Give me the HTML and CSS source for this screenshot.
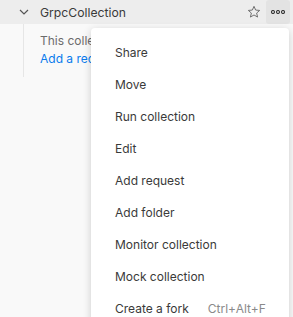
FILE: index.html
```html
<!DOCTYPE html>
<html lang="en">
  <head>
    <meta charset="UTF-8" />
    <title>Collection</title>
    <link rel="stylesheet" href="styles.css">
  </head>
  <body>
    <div class="sidebar">
      <div class="collection-row">
        <span class="chevron">
          <svg width="10" height="6" viewBox="0 0 10 6"><path d="M1 1l4 4 4-4" fill="none" stroke="#555" stroke-width="1.2"/></svg>
        </span>
        <span class="collection-name">GrpcCollection</span>
        <span class="star">
          <svg width="14" height="14" viewBox="0 0 16 16"><path d="M8 1.5l1.9 4.3 4.6.4-3.5 3 1.1 4.6L8 11.4l-4.1 2.4 1.1-4.6-3.5-3 4.6-.4z" fill="none" stroke="#6b6b6b" stroke-width="1.1" stroke-linejoin="round"/></svg>
        </span>
        <span class="more">
          <svg width="14" height="4" viewBox="0 0 14 4"><circle cx="2" cy="2" r="1.5" fill="none" stroke="#333" stroke-width="1.1"/><circle cx="7" cy="2" r="1.5" fill="none" stroke="#333" stroke-width="1.1"/><circle cx="12" cy="2" r="1.5" fill="none" stroke="#333" stroke-width="1.1"/></svg>
        </span>
      </div>
      <div class="collection-body">
        <p class="empty-text">This collection is empty</p>
        <a class="add-link" href="#">Add a request</a>
      </div>
    </div>

    <ul class="menu">
      <li>Share</li>
      <li>Move</li>
      <li>Run collection</li>
      <li>Edit</li>
      <li>Add request</li>
      <li>Add folder</li>
      <li>Monitor collection</li>
      <li>Mock collection</li>
      <li>Create a fork<span class="shortcut">Ctrl+Alt+F</span></li>
    </ul>
  </body>
</html>
```

FILE: styles.css
```css
body {
  margin: 0;
  background: #f9f9f9;
  font-family: Inter, "Noto Sans", sans-serif;
  font-size: 12px;
  color: #3a3a3a;
  overflow: hidden;
}

.sidebar {
  width: 293px;
}

.collection-row {
  display: flex;
  align-items: center;
  height: 24px;
  background: #ededed;
}

.chevron {
  display: flex;
  width: 10px;
  margin-left: 19px;
  margin-right: 11px;
}

.collection-name {
  flex: 1;
  font-size: 12.2px;
  color: #3a3a3a;
}

.star {
  display: flex;
  margin-right: 5px;
}

.more {
  display: flex;
  align-items: center;
  justify-content: center;
  width: 24px;
  height: 24px;
  margin-right: 3px;
  background: #e3e3e3;
  border-radius: 3px;
}

.collection-body {
  margin-left: 23px;
  border-left: 1px solid #e6e6e6;
  padding: 9px 0 8px 16px;
  height: 36px;
}

.empty-text {
  margin: 0 0 2px;
  color: #6b6b6b;
  line-height: 16px;
}

.add-link {
  color: #097bed;
  text-decoration: none;
  line-height: 16px;
}

.menu {
  position: absolute;
  top: 28px;
  left: 91px;
  width: 198px;
  margin: 0;
  padding: 8px 0;
  list-style: none;
  background: #fff;
  border-radius: 4px;
  box-shadow: 0 2px 8px rgba(0, 0, 0, 0.18);
}

.menu li {
  display: flex;
  align-items: center;
  height: 32px;
  padding-left: 24px;
  color: #3a3a3a;
}

.shortcut {
  margin-left: 19px;
  color: #8a8a8a;
}
```
